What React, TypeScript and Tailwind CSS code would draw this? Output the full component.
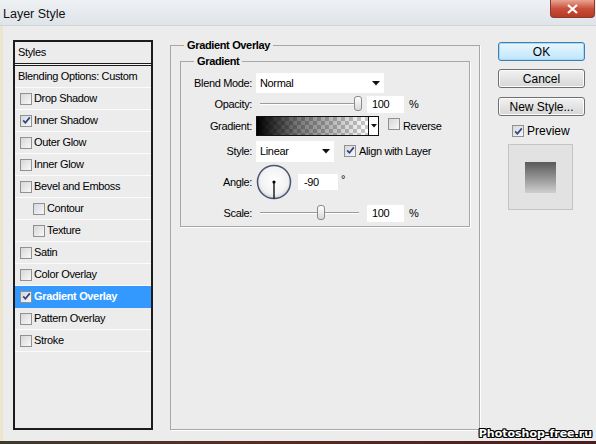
import React from "react";

function Check({ checked }: { checked?: boolean }) {
  return (
    <span className="inline-flex h-[12px] w-[12px] shrink-0 items-center justify-center border border-[#8f9193] bg-gradient-to-br from-[#d6d7d9] to-[#f8f8f8]">
      {checked && (
        <svg width="9" height="9" viewBox="0 0 9 9">
          <path d="M1.2 4.4 L3.4 6.8 L7.8 1.4" stroke="#2f3f86" strokeWidth="1.7" fill="none" />
        </svg>
      )}
    </span>
  );
}

function Arrow() {
  return (
    <svg width="8" height="5" viewBox="0 0 8 5">
      <path d="M0 0 H8 L4 4.5 Z" fill="#111" />
    </svg>
  );
}

function Slider({ thumb }: { thumb: number }) {
  return (
    <div className="relative h-[18px] w-[107px]">
      <div className="absolute left-[4px] right-[4px] top-[8px] h-[2px] border-t border-[#9a9a9a] border-b border-b-white" />
      <div
        className="absolute top-[1px] h-[15px] w-[8px] rounded-[3px] border border-[#8a8a8a] bg-gradient-to-b from-white to-[#d8d8d8]"
        style={{ left: thumb }}
      />
    </div>
  );
}

function Row({ label, children, className }: { label: string; children: React.ReactNode; className?: string }) {
  return (
    <div className={"flex items-center " + (className ?? "")}>
      <span className="w-[71px] shrink-0 text-right">{label}</span>
      <div className="ml-[4px] flex items-center">{children}</div>
    </div>
  );
}

const items: { label: string; checked?: boolean; indent?: boolean; active?: boolean }[] = [
  { label: "Drop Shadow" },
  { label: "Inner Shadow", checked: true },
  { label: "Outer Glow" },
  { label: "Inner Glow" },
  { label: "Bevel and Emboss" },
  { label: "Contour", indent: true },
  { label: "Texture", indent: true },
  { label: "Satin" },
  { label: "Color Overlay" },
  { label: "Gradient Overlay", checked: true, active: true },
  { label: "Pattern Overlay" },
  { label: "Stroke" },
];

function Button({ children, primary }: { children: React.ReactNode; primary?: boolean }) {
  return (
    <div
      className={
        "flex h-[19px] w-[87px] items-center justify-center rounded-[3px] border text-[12px] tracking-normal " +
        (primary
          ? "border-[#3c7fb1] bg-gradient-to-b from-[#eaf6fd] to-[#bee6fd] shadow-[inset_0_0_0_1px_#a7d9f5]"
          : "border-[#707070] bg-gradient-to-b from-[#f2f2f2] to-[#d6d6d6] shadow-[inset_0_0_0_1px_#fcfcfc]")
      }
    >
      {children}
    </div>
  );
}

export default function App() {
  return (
    <div className="relative h-[444px] w-[596px] overflow-hidden bg-[#ececec] font-['Liberation_Sans',Arial,sans-serif] text-[11px] tracking-[-0.35px] text-black">
      {/* Title bar */}
      <div className="flex h-[26px] items-start justify-between border-b border-[#cfd4da] bg-gradient-to-b from-[#eef1f4] to-[#dfe4e9]">
        <span className="ml-[3px] mt-[5px] text-[12.5px] tracking-normal text-[#111]">Layer Style</span>
        <div className="mr-[1px] flex h-[18px] w-[45px] items-center justify-center rounded-b-[4px] border border-t-0 border-[#8a3a30] bg-gradient-to-b from-[#e8a493] via-[#c9503c] to-[#b73a22]">
          <svg width="11" height="10" viewBox="0 0 11 10">
            <path d="M1 1 L10 9 M10 1 L1 9" stroke="#fff" strokeWidth="2.2" />
          </svg>
        </div>
      </div>

      {/* Body */}
      <div className="flex h-[415px] border-l-[3px] border-[#ebe6cc]">
        {/* Styles list */}
        <div className="ml-[10px] mt-[14px] flex h-[390px] w-[140px] flex-col border-2 border-[#1c1c1c]">
          <div className="flex h-[21px] items-center pl-[3px]">Styles</div>
          <div className="h-[3px] border-y border-[#1c1c1c] bg-[#f4f4f4]" />
          <div className="flex h-[22px] items-center border-b border-[#fbfbfb] pl-[3px]">Blending Options: Custom</div>
          {items.map((it) => (
            <div
              key={it.label}
              className={
                "flex h-[22px] items-center border-b " +
                (it.active ? "border-[#3399ff] bg-[#3399ff] font-bold text-white" : "border-[#fbfbfb]") +
                (it.indent ? " pl-[18px]" : " pl-[5px]")
              }
            >
              <Check checked={it.checked} />
              <span className="ml-[2px]">{it.label}</span>
            </div>
          ))}
        </div>

        {/* Gradient Overlay group */}
        <fieldset className="ml-[17px] mt-[13px] h-[391px] w-[310px] border border-[#a7a7a7] shadow-[1px_1px_0_#fff]">
          <legend className="ml-[13px] bg-[#ececec] px-[3px] font-bold leading-[13px]">Gradient Overlay</legend>
          <fieldset className="ml-[9px] mt-[3px] h-[172px] w-[290px] border border-[#a7a7a7] pb-[5px] pt-[5px] shadow-[1px_1px_0_#fff]">
            <legend className="ml-[13px] bg-[#ececec] px-[3px] font-bold leading-[13px]">Gradient</legend>

            <Row label="Blend Mode:" className="h-[20px]">
              <div className="flex h-[20px] w-[128px] items-center justify-between bg-white pl-[4px] pr-[4px]">
                <span>Normal</span>
                <Arrow />
              </div>
            </Row>

            <Row label="Opacity:" className="mt-[2px] h-[18px]">
              <Slider thumb={98} />
              <div className="ml-[4px] flex h-[17px] w-[37px] items-center bg-white pl-[5px]">100</div>
              <span className="ml-[5px]">%</span>
            </Row>

            <Row label="Gradient:" className="mt-[3px] h-[20px]">
              <div className="flex h-[20px] w-[123px] border border-[#111]">
                <div className="flex-1 bg-[linear-gradient(to_right,#000_0%,rgba(0,0,0,0.55)_35%,transparent_100%),repeating-conic-gradient(#c9c9c9_0_25%,#ffffff_0_50%)] bg-[length:100%_100%,8px_8px]" />
                <div className="flex w-[10px] items-center justify-center border-l border-[#111] bg-white">
                  <svg width="6" height="4" viewBox="0 0 6 4">
                    <path d="M0 0 H6 L3 3.5 Z" fill="#111" />
                  </svg>
                </div>
              </div>
              <span className="ml-[9px]">
                <Check />
              </span>
              <span className="ml-[3px]">Reverse</span>
            </Row>

            <Row label="Style:" className="mt-[5px] h-[21px]">
              <div className="flex h-[21px] w-[78px] items-center justify-between bg-white pl-[4px] pr-[4px]">
                <span>Linear</span>
                <Arrow />
              </div>
              <span className="ml-[10px]">
                <Check checked />
              </span>
              <span className="ml-[3px]">Align with Layer</span>
            </Row>

            <Row label="Angle:" className="mt-[2px] h-[36px]">
              <svg width="36" height="36" viewBox="0 0 36 36">
                <defs>
                  <radialGradient id="dial" cx="50%" cy="45%" r="55%">
                    <stop offset="0%" stopColor="#ffffff" />
                    <stop offset="75%" stopColor="#f2f2f2" />
                    <stop offset="100%" stopColor="#cfd3da" />
                  </radialGradient>
                </defs>
                <circle cx="18" cy="18" r="16.5" fill="url(#dial)" stroke="#4b5470" strokeWidth="1.5" />
                <line x1="18" y1="18" x2="18" y2="34.5" stroke="#000" strokeWidth="1.3" />
                <circle cx="18" cy="18" r="1.6" fill="#000" />
              </svg>
              <div className="ml-[6px] flex h-[16px] w-[40px] items-center bg-white pl-[6px]">-90</div>
              <span className="-mt-[6px] ml-[3px]">°</span>
            </Row>

            <Row label="Scale:" className="mt-[4px] h-[18px]">
              <Slider thumb={61} />
              <div className="ml-[4px] flex h-[17px] w-[37px] items-center bg-white pl-[5px]">100</div>
              <span className="ml-[5px]">%</span>
            </Row>
          </fieldset>
        </fieldset>

        {/* Right column */}
        <div className="ml-[18px] mt-[16px] flex w-[87px] flex-col">
          <Button primary>OK</Button>
          <div className="mt-[8px]">
            <Button>Cancel</Button>
          </div>
          <div className="mt-[9px]">
            <Button>New Style...</Button>
          </div>
          <div className="ml-[14px] mt-[8px] flex items-center leading-[14px]">
            <Check checked />
            <span className="ml-[3px] text-[12px] leading-[14px] tracking-normal">Preview</span>
          </div>
          <div className="ml-[10px] mt-[6px] flex h-[66px] w-[65px] items-center justify-center border border-[#c4c4c4] bg-[#e2e2e2]">
            <div className="h-[31px] w-[31px] bg-gradient-to-b from-[#5a5a5a] to-[#cfcfcf]" />
          </div>
        </div>
      </div>

      {/* bottom frame */}
      <div className="h-[3px] bg-gradient-to-r from-[#3d3a2c] via-[#5a2a22] to-[#4a1e1e]" />

      {/* watermark */}
      <div className="absolute bottom-[2px] right-[4px] font-['DejaVu_Sans',sans-serif] text-[11px] font-bold tracking-[0px] text-white [text-shadow:1px_0_0_#000,-1px_0_0_#000,0_1px_0_#000,0_-1px_0_#000,1px_1px_0_#000,-1px_-1px_0_#000,1px_-1px_0_#000,-1px_1px_0_#000]">
        Photoshop-free.ru
      </div>
    </div>
  );
}
